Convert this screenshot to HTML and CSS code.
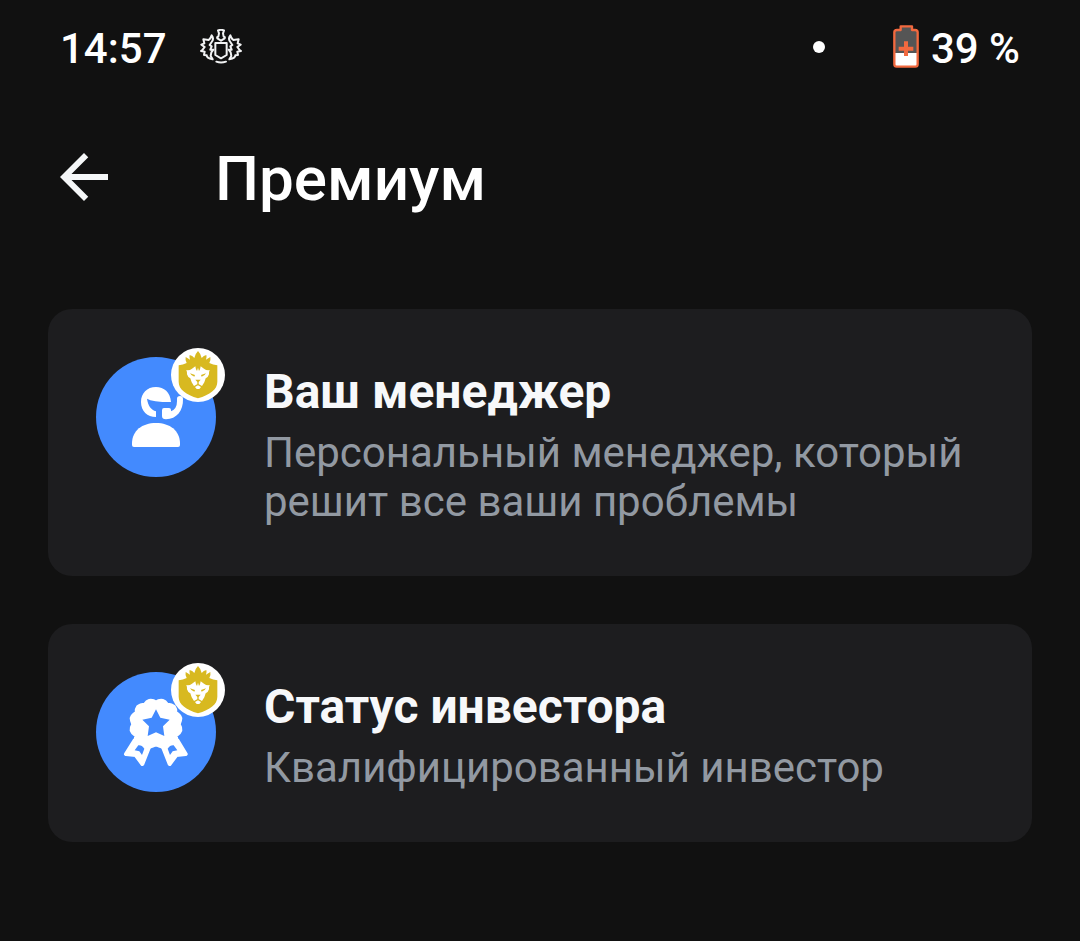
FILE: index.html
```html
<!DOCTYPE html>
<html lang="ru">
<head>
<meta charset="utf-8">
<meta name="viewport" content="width=device-width, initial-scale=1">
<title>Премиум</title>
<link rel="stylesheet" href="styles.css">
</head>
<body>
<svg class="defs" aria-hidden="true">
  <symbol id="lion" viewBox="18 15 162 162">
    <circle cx="99" cy="96" r="81" fill="#fff"/>
    <path fill="#d8b920" d="M41 67Q54 65 65 60Q60 50 62 42Q68 46 75 50Q72 43 74 36Q82 38 88 45Q90 33 99 24Q108 33 110 45Q116 38 124 36Q126 43 123 50Q130 46 136 42Q138 50 133 60Q144 65 157 67V116C157 140 135 154 99 166C63 154 41 140 41 116Z"/>
    <path fill="#fff" d="M64 81Q73 83 81 77L91 70L93 79L96 84L99 74L102 84L105 79L107 70L117 77Q125 83 134 81Q131 88 132 94Q130 102 122 106L118 118L111 129L99 122L87 129L80 118L76 106Q68 102 66 94Q67 88 64 81Z"/>
    <path fill="#fff" d="M90 132L99 127L108 132L103 138H95Z"/>
    <path fill="#d8b920" d="M75 91L90 96L88 101Q79 99 75 91ZM123 91L108 96L110 101Q119 99 123 91ZM91 110H107L101 117V123H97V117Z"/>
  </symbol>
</svg>

<header class="status-bar">
  <div class="status-group">
    <time>14:57</time>
    <svg class="crest" viewBox="0 0 126 108" aria-hidden="true">
      <g fill="none" stroke="#f2f3f4" stroke-width="6" stroke-linecap="round" stroke-linejoin="round">
        <path d="M54 4Q63 1 72 4L69 13L71 23Q76 23 74 28L63 35L52 28Q50 23 55 23L57 13Z"/>
        <path d="M46 42H80V78L63 88L46 78Z"/>
        <path d="M49 98Q63 103 78 98"/>
        <path d="M35 19Q33 28 26 33L10 31L13 43L4 47L14 54L8 62L3 66L14 68L12 78L20 79Q20 88 38 91L32 81L34 70L40 62L31 62L35 52L29 48L35 39Q43 29 35 19Z"/>
        <path d="M91 19Q93 28 100 33L116 31L113 43L122 47L112 54L118 62L123 66L112 68L114 78L106 79Q106 88 88 91L94 81L92 70L86 62L95 62L91 52L97 48L91 39Q83 29 91 19Z"/>
      </g>
    </svg>
  </div>
  <div class="status-group">
    <span class="status-dot"></span>
    <svg class="battery" viewBox="279 30 78 129" aria-hidden="true">
      <path fill="#555" d="M302 34H336V45H352V155H284V45H302Z"/>
      <path fill="#fff" d="M284 114H353V155H284Z"/>
      <path fill="none" stroke="#f2693f" stroke-width="7" stroke-linejoin="round" d="M302 34H336V45H345Q353 45 353 52V148Q353 155 346 155H290Q283 155 283 148V52Q283 45 291 45H302Z"/>
      <path stroke="#f2693f" stroke-width="12" d="M318 79V123M296 101H340"/>
    </svg>
    <span>39 %</span>
  </div>
</header>

<div class="toolbar">
  <button class="back" type="button" aria-label="Назад">
    <svg viewBox="0 0 24 24" aria-hidden="true"><path fill="#f5f7f8" d="M20 11H7.83l5.59-5.59L12 4l-8 8 8 8 1.41-1.41L7.83 13H20z"/></svg>
  </button>
  <h1 class="page-title">Премиум</h1>
</div>

<main class="cards">
  <a class="card" href="#manager">
    <span class="avatar">
      <svg class="avatar-icon" viewBox="18 51 360 360" aria-hidden="true">
        <g fill="#fff">
          <path d="M126 309C127 272 156 249 198 249C240 249 269 272 270 309V315Q270 321 264 321H132Q126 321 126 315Z"/>
          <path d="M198 231V214C183 209 174 198 171 176Q186 186 243 186C241 157 222 141 198 141C171 141 153 160 153 186C153 213 172 231 198 231Z"/>
          <path d="M222 204H237Q243 204 243 210V214Q261 207 261 184V176Q261 168 270 168Q279 168 279 177C280 212 260 237 228 238Q216 238 216 228V211Q216 204 222 204Z"/>
        </g>
      </svg>
      <svg class="badge" aria-hidden="true"><use href="#lion"/></svg>
    </span>
    <span class="card-text">
      <strong class="card-title">Ваш менеджер</strong>
      <span class="card-note">Персональный менеджер, который решит все ваши проблемы</span>
    </span>
  </a>
  <a class="card" href="#status">
    <span class="avatar">
      <svg class="avatar-icon" viewBox="18 51 360 360" aria-hidden="true">
        <g fill="#fff" stroke="#fff" stroke-width="12" stroke-linejoin="round">
          <path d="M198 143Q208 136 218 138Q225 140 231 149Q245 149 252 156Q257 162 256 173Q268 180 271 190Q271 196 266 208Q272 218 271 226Q268 235 258 241V252Q256 262 240 266L218 275Q208 273 198 268Q188 273 178 275L156 266Q140 262 138 252V241Q128 235 125 226Q124 218 130 208Q125 196 125 190Q128 180 140 173Q139 162 144 156Q151 149 165 149Q171 140 178 138Q188 136 198 143Z"/>
          <path d="M134 256L108 297L137 300L157 327L178 274ZM262 256L287 297L259 300L239 327L218 274Z"/>
        </g>
        <path fill="#438afe" d="M198 163L211 188L239 194L219 214L223 243L198 232L173 243L177 214L157 194L185 188Z"/>
        <path fill="#438afe" d="M145 271Q156 270 163 281L156 300L148 289L134 286ZM251 271Q240 270 233 281L240 300L248 289L262 286Z"/>
      </svg>
      <svg class="badge" aria-hidden="true"><use href="#lion"/></svg>
    </span>
    <span class="card-text">
      <strong class="card-title">Статус инвестора</strong>
      <span class="card-note">Квалифицированный инвестор</span>
    </span>
  </a>
</main>
</body>
</html>
```
FILE: styles.css
```css
* {
  box-sizing: border-box;
}

body {
  margin: 0;
  min-height: 100vh;
  background: #111;
  color: #fff;
  font-family: Roboto, "Noto Sans", sans-serif;
}

.defs {
  position: absolute;
  width: 0;
  height: 0;
}

.status-bar {
  display: flex;
  justify-content: space-between;
  height: 93px;
  padding: 0 60px;
  font-size: 42px;
  font-weight: 500;
}

.status-group {
  display: flex;
  align-items: center;
}

.status-group time,
.status-group span {
  padding-top: 4px;
}

.crest {
  width: 42px;
  height: 36px;
  margin-left: 33px;
}

.status-group .status-dot {
  width: 12px;
  height: 12px;
  margin-right: 68px;
  padding: 0;
  border-radius: 50%;
  background: #fff;
}

.battery {
  width: 26px;
  height: 43px;
  margin-right: 12px;
}

.toolbar {
  display: flex;
  align-items: center;
  height: 168px;
  padding: 0 48px;
}

.back {
  width: 72px;
  height: 72px;
  padding: 0;
  border: 0;
  background: none;
  cursor: pointer;
}

.back svg {
  display: block;
  width: 72px;
  height: 72px;
}

.page-title {
  margin: 0;
  padding: 4px 0 0 95px;
  font-size: 62px;
  font-weight: 500;
  line-height: 72px;
}

.cards {
  display: flex;
  flex-direction: column;
  gap: 48px;
  padding: 48px;
}

.card {
  display: flex;
  align-items: flex-start;
  gap: 48px;
  padding: 48px;
  border-radius: 24px;
  background: #1d1d1f;
  color: inherit;
  text-decoration: none;
}

.avatar {
  position: relative;
  flex: none;
  width: 120px;
  height: 120px;
  border-radius: 50%;
  background: #438afe;
}

.avatar-icon {
  display: block;
  width: 100%;
  height: 100%;
}

.badge {
  position: absolute;
  top: -9px;
  right: -9px;
  width: 54px;
  height: 54px;
}

.card-text {
  display: flex;
  flex: 1;
  flex-direction: column;
  gap: 8px;
  padding: 6px 0 2px;
}

.card-title {
  color: #f7f8fa;
  font-size: 48px;
  font-weight: 700;
  line-height: 57px;
}

.card-note {
  color: #9299a2;
  font-size: 42px;
  line-height: 49px;
}
```
